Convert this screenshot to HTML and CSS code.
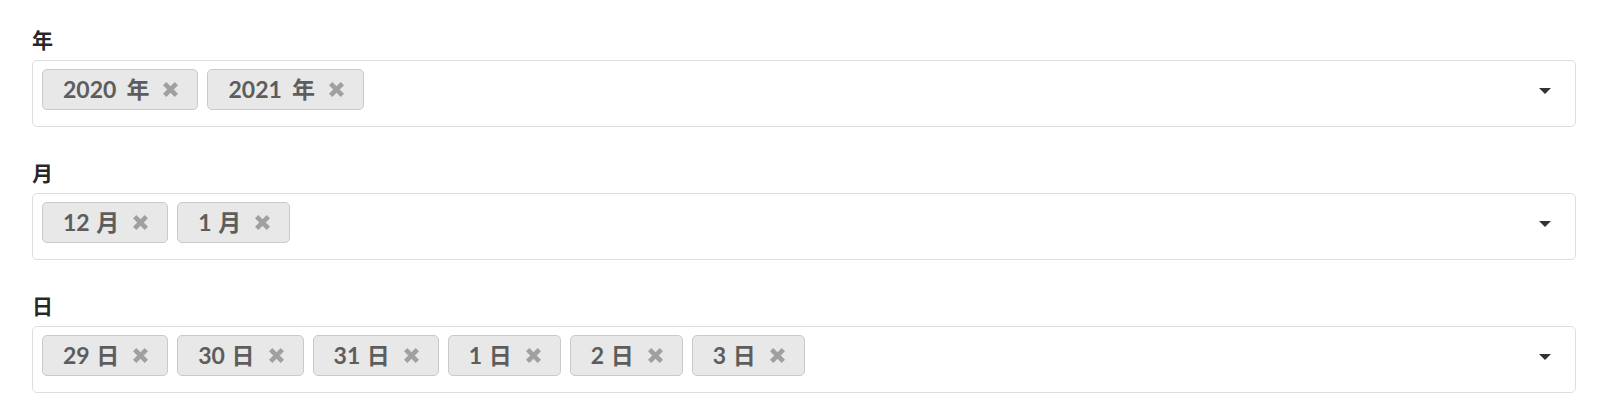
FILE: index.html
```html
<!DOCTYPE html>
<html lang="ja">
    <head>
        <meta charset="utf-8">
        <title>日付フィルター</title>
        <link rel="stylesheet" href="styles.css">
    </head>
    <body>
        <form class="filters">
            <!-- Year -->
            <div class="field">
                <label class="field-label">年</label>
                <div class="select">
                    <div class="chips">
                        <span class="chip chip-year">2020 年<svg class="chip-remove" viewBox="0 0 16 16"><path d="M2.5 2.5L13.5 13.5M13.5 2.5L2.5 13.5"/></svg></span>
                        <span class="chip chip-year">2021 年<svg class="chip-remove" viewBox="0 0 16 16"><path d="M2.5 2.5L13.5 13.5M13.5 2.5L2.5 13.5"/></svg></span>
                    </div>
                    <span class="caret"></span>
                </div>
            </div>

            <!-- Month -->
            <div class="field">
                <label class="field-label">月</label>
                <div class="select">
                    <div class="chips">
                        <span class="chip">12 月<svg class="chip-remove" viewBox="0 0 16 16"><path d="M2.5 2.5L13.5 13.5M13.5 2.5L2.5 13.5"/></svg></span>
                        <span class="chip">1 月<svg class="chip-remove" viewBox="0 0 16 16"><path d="M2.5 2.5L13.5 13.5M13.5 2.5L2.5 13.5"/></svg></span>
                    </div>
                    <span class="caret"></span>
                </div>
            </div>

            <!-- Day -->
            <div class="field">
                <label class="field-label">日</label>
                <div class="select">
                    <div class="chips">
                        <span class="chip">29 日<svg class="chip-remove" viewBox="0 0 16 16"><path d="M2.5 2.5L13.5 13.5M13.5 2.5L2.5 13.5"/></svg></span>
                        <span class="chip">30 日<svg class="chip-remove" viewBox="0 0 16 16"><path d="M2.5 2.5L13.5 13.5M13.5 2.5L2.5 13.5"/></svg></span>
                        <span class="chip">31 日<svg class="chip-remove" viewBox="0 0 16 16"><path d="M2.5 2.5L13.5 13.5M13.5 2.5L2.5 13.5"/></svg></span>
                        <span class="chip">1 日<svg class="chip-remove" viewBox="0 0 16 16"><path d="M2.5 2.5L13.5 13.5M13.5 2.5L2.5 13.5"/></svg></span>
                        <span class="chip">2 日<svg class="chip-remove" viewBox="0 0 16 16"><path d="M2.5 2.5L13.5 13.5M13.5 2.5L2.5 13.5"/></svg></span>
                        <span class="chip">3 日<svg class="chip-remove" viewBox="0 0 16 16"><path d="M2.5 2.5L13.5 13.5M13.5 2.5L2.5 13.5"/></svg></span>
                    </div>
                    <span class="caret"></span>
                </div>
            </div>
        </form>
    </body>
</html>
```

FILE: styles.css
```css
/* Page */
body {
    margin: 0;
    padding: 27px 28px 0 32px;
    background-color: #fff;
    font-family: Lato, "Noto Sans CJK JP", sans-serif;
    color: rgba(0, 0, 0, 0.87);
}

/* Form fields */
.field {
    margin-bottom: 33px;
}

.field-label {
    display: block;
    margin-bottom: 7px;
    font-size: 21px;
    font-weight: 700;
    line-height: 26px;
}

/* Multiple select box */
.select {
    display: flex;
    align-items: center;
    min-height: 67px;
    box-sizing: border-box;
    padding: 8px 24px 16px 9px;
    border: 1px solid #dedede;
    border-radius: 5px;
    background-color: #fff;
}

.chips {
    flex: 1;
    display: flex;
    flex-wrap: wrap;
    gap: 9px;
    align-self: flex-start;
}

/* Selected value chips */
.chip {
    display: inline-flex;
    align-items: center;
    height: 41px;
    box-sizing: border-box;
    padding: 0 18px 0 20px;
    border: 1px solid #cacaca;
    border-radius: 5px;
    background-color: #e8e8e8;
    color: #5d5d5d;
    font-size: 23px;
    font-weight: 700;
    line-height: 23px;
    word-spacing: 1px;
}

.chip-year {
    word-spacing: 4.5px;
}

.chip-remove {
    width: 17px;
    height: 17px;
    margin-left: 13px;
    fill: none;
    stroke: #a0a0a0;
    stroke-width: 4.4;
}

/* Dropdown arrow */
.caret {
    width: 0;
    height: 0;
    margin-top: 3px;
    border-top: 6px solid #333;
    border-left: 6.5px solid transparent;
    border-right: 6.5px solid transparent;
}
```
